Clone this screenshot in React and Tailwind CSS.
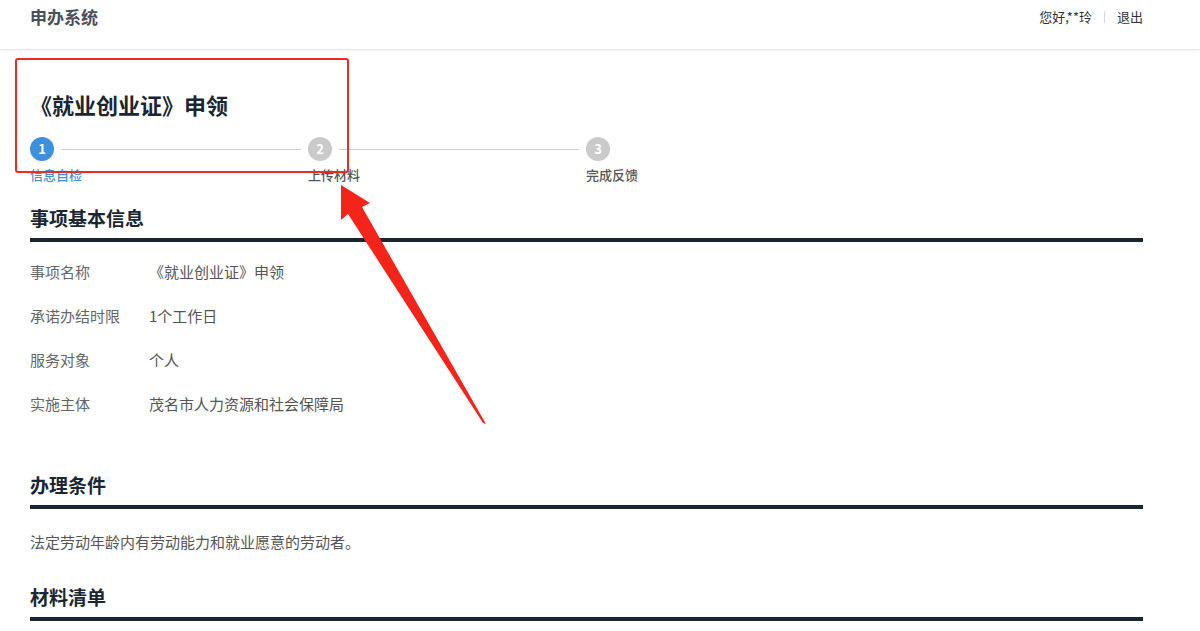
import React from "react";

const steps = [
  { n: 1, label: "信息自检", active: true },
  { n: 2, label: "上传材料" },
  { n: 3, label: "完成反馈" },
];

const info = [
  ["事项名称", "《就业创业证》申领"],
  ["承诺办结时限", "1个工作日"],
  ["服务对象", "个人"],
  ["实施主体", "茂名市人力资源和社会保障局"],
];

function SectionTitle({ children }) {
  return (
    <div>
      <h2 className="text-[19px] leading-[28px] font-bold text-[#1b2633]">{children}</h2>
      <div className="mt-[6px] h-[4px] bg-[#1b2633]" />
    </div>
  );
}

export default function App() {
  return (
    <div
      className="relative min-h-screen bg-white text-[#555]"
      style={{ fontFamily: '"Noto Sans CJK SC", "Noto Sans", sans-serif' }}
    >
      {/* header */}
      <header className="h-[50px] border-b border-[#e6e6e6] shadow-[0_1px_3px_rgba(0,0,0,0.06)] pl-[30px] pr-[57px] pt-[5px] flex items-start justify-between">
        <div className="text-[17px] leading-[24px] font-bold text-[#4a505c]">申办系统</div>
        <div className="flex items-center h-[24px] text-[13px] text-[#333]">
          <span>您好,**玲</span>
          <span className="mx-[12px] w-px h-[12px] bg-[#d8d8d8]" />
          <span>退出</span>
        </div>
      </header>

      <main className="pl-[30px] pr-[57px]">
        <h1 className="mt-[38px] text-[22px] leading-[32px] font-bold text-[#1b2633]">《就业创业证》申领</h1>

        {/* steps */}
        <div className="mt-[17px] flex">
          {steps.map((s, i) => (
            <div key={s.n} className={i < steps.length - 1 ? "w-[278px]" : ""}>
              <div className="flex items-center">
                <div
                  className={`w-[24px] h-[24px] rounded-full flex items-center justify-center text-[13px] font-bold text-white ${
                    s.active ? "bg-[#3f90dc]" : "bg-[#cacaca]"
                  }`}
                >
                  {s.n}
                </div>
                {i < steps.length - 1 && <div className="flex-1 h-px bg-[#cfcfcf] mx-[7px]" />}
              </div>
              <div
                className={`mt-[5px] text-[13px] leading-[18px] font-medium ${
                  s.active ? "text-[#3f90dc]" : "text-[#555]"
                }`}
              >
                {s.label}
              </div>
            </div>
          ))}
        </div>

        {/* basic info */}
        <section className="mt-[20px]">
          <SectionTitle>事项基本信息</SectionTitle>
          <div className="pt-[8px]">
            {info.map(([k, v]) => (
              <div key={k} className="flex h-[44px] items-center text-[15px]">
                <span className="w-[119px] text-[#666]">{k}</span>
                <span className="text-[#555]">{v}</span>
              </div>
            ))}
          </div>
        </section>

        <section className="mt-[45px]">
          <SectionTitle>办理条件</SectionTitle>
          <p className="mt-[22px] text-[15px] leading-[22px] text-[#555]">法定劳动年龄内有劳动能力和就业愿意的劳动者。</p>
        </section>

        <section className="mt-[30px]">
          <SectionTitle>材料清单</SectionTitle>
        </section>
      </main>

      {/* annotation: red box */}
      <div className="absolute left-[15px] top-[58px] w-[334px] h-[115px] border-2 border-[#ee2a22] rounded-[3px] pointer-events-none" />

      {/* annotation: red arrow */}
      <svg className="absolute left-0 top-0 pointer-events-none" width="1200" height="631">
        <path
          d="M341 185 L370 203 L362 207 L486 424 L483 423 L348 214 L341 220 Z"
          fill="#f4241a"
        />
      </svg>
    </div>
  );
}
